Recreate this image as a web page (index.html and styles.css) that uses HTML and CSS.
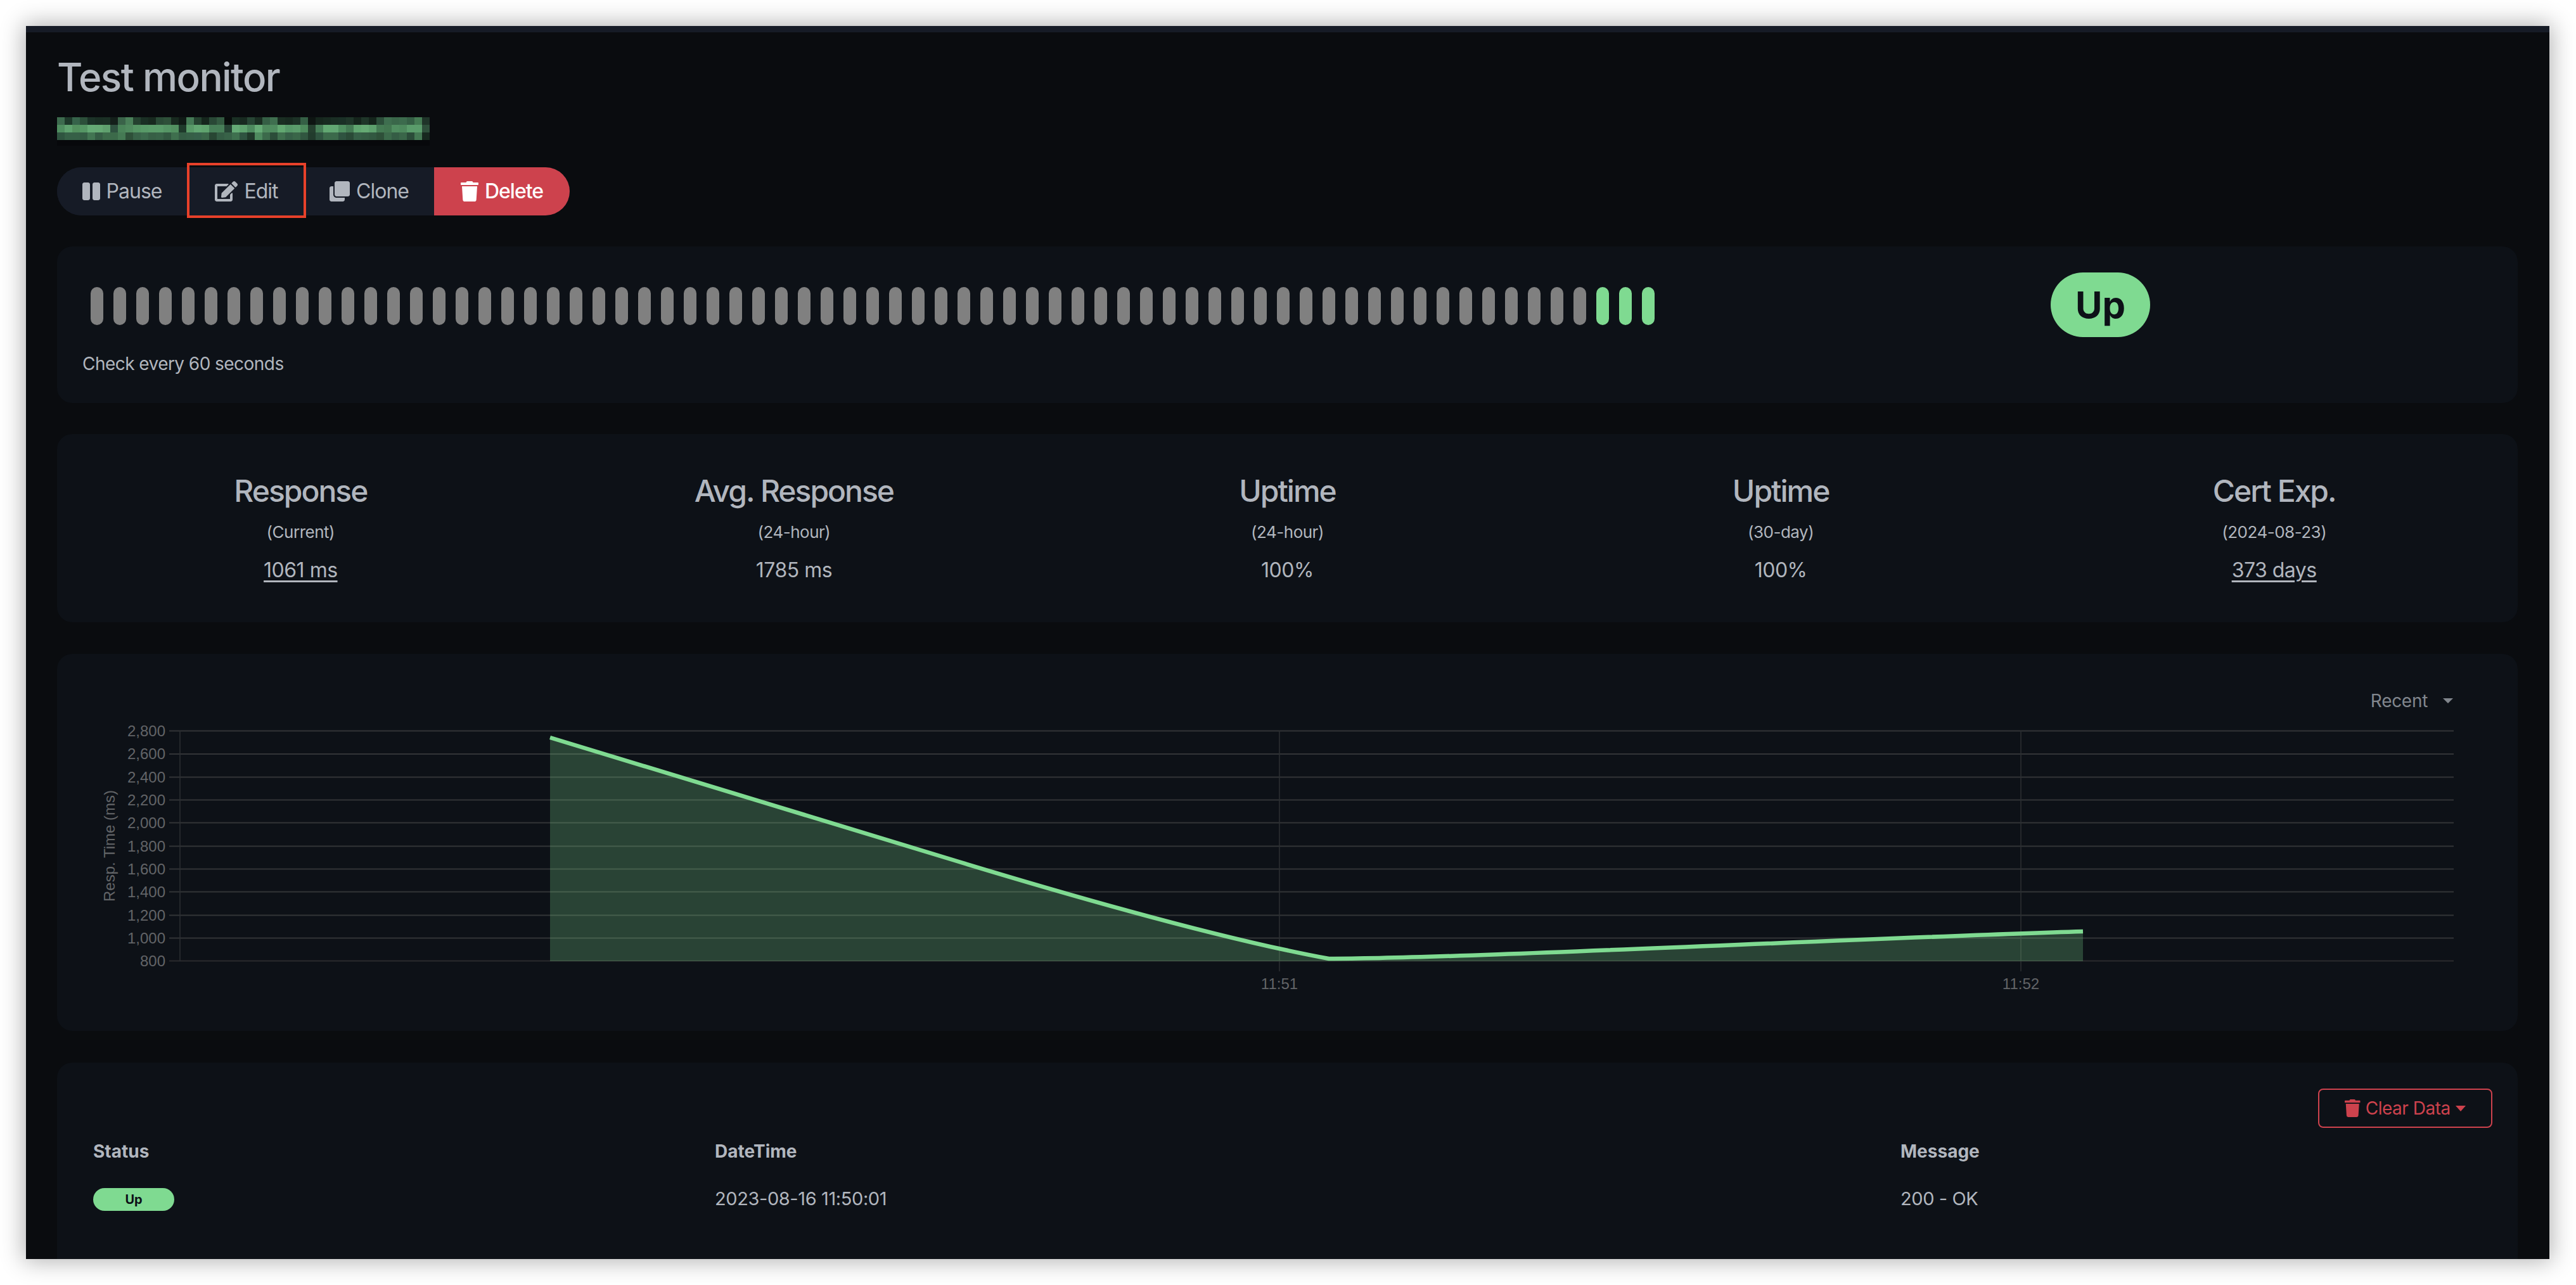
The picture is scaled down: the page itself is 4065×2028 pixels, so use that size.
FILE: index.html
```html
<!DOCTYPE html>
<html lang="en">
<head>
<meta charset="utf-8">
<title>Test monitor</title>
<link rel="stylesheet" href="styles.css">
</head>
<body>
<div class="window">
  <div class="strip"></div>
  <main class="content">
    <h1 class="title">Test monitor</h1>
    <svg class="mosaic" viewBox="0 0 588 45" width="588" height="45" aria-hidden="true" shape-rendering="crispEdges">
      <g>
        <rect x="0" fill="#3d6b4e"/><rect x="12" fill="#1e3a2b"/><rect x="24" fill="#36634a"/><rect x="36" fill="#2c4f3a"/><rect x="48" fill="#1c3328"/><rect x="60" fill="#1a2f24"/><rect x="72" fill="#1b3025"/><rect x="84" fill="#141f1a"/><rect x="96" fill="#3a6349"/><rect x="108" fill="#4a8059"/><rect x="120" fill="#24412f"/><rect x="132" fill="#1a2f24"/><rect x="144" fill="#18291f"/><rect x="156" fill="#2a4a36"/><rect x="168" fill="#2e5039"/><rect x="180" fill="#18291f"/><rect x="192" fill="#101a16"/><rect x="204" fill="#457a56"/><rect x="216" fill="#24412f"/><rect x="228" fill="#16261d"/><rect x="240" fill="#294836"/><rect x="252" fill="#335a41"/><rect x="264" fill="#080c0b"/><rect x="276" fill="#1a3024"/><rect x="288" fill="#182a20"/><rect x="300" fill="#274534"/><rect x="312" fill="#1a2e22"/><rect x="324" fill="#355f45"/><rect x="336" fill="#3f6f4f"/><rect x="348" fill="#1a2e22"/><rect x="360" fill="#182a20"/><rect x="372" fill="#1c3226"/><rect x="384" fill="#355f45"/><rect x="396" fill="#0e1512"/><rect x="408" fill="#16261d"/><rect x="420" fill="#182a20"/><rect x="432" fill="#1a2e24"/><rect x="444" fill="#1a3026"/><rect x="456" fill="#1f3629"/><rect x="468" fill="#15251c"/><rect x="480" fill="#1f3629"/><rect x="492" fill="#15251c"/><rect x="504" fill="#2c4e3a"/><rect x="516" fill="#3e6e4f"/><rect x="528" fill="#3a674a"/><rect x="540" fill="#3c6b4d"/><rect x="552" fill="#355f45"/><rect x="564" fill="#457c54"/><rect x="576" fill="#1f3429"/>
      </g>
      <g transform="translate(0 12)">
        <rect x="0" fill="#4f8e60"/><rect x="12" fill="#5fa26f"/><rect x="24" fill="#53915f"/><rect x="36" fill="#559664"/><rect x="48" fill="#65aa75"/><rect x="60" fill="#65a974"/><rect x="72" fill="#5fa06e"/><rect x="84" fill="#2f5240"/><rect x="96" fill="#4a8459"/><rect x="108" fill="#4f8a5e"/><rect x="120" fill="#559564"/><rect x="132" fill="#589a68"/><rect x="144" fill="#5a9c6a"/><rect x="156" fill="#5a9c6a"/><rect x="168" fill="#559565"/><rect x="180" fill="#529060"/><rect x="192" fill="#1f3a2b"/><rect x="204" fill="#589a68"/><rect x="216" fill="#62a772"/><rect x="228" fill="#5fa36e"/><rect x="240" fill="#477f58"/><rect x="252" fill="#477f58"/><rect x="264" fill="#264334"/><rect x="276" fill="#65ab76"/><rect x="288" fill="#5ea26e"/><rect x="300" fill="#4d8a5e"/><rect x="312" fill="#66ab76"/><rect x="324" fill="#4f8b5e"/><rect x="336" fill="#4f8c5f"/><rect x="348" fill="#62a871"/><rect x="360" fill="#569868"/><rect x="372" fill="#5a9c6b"/><rect x="384" fill="#4d8a5c"/><rect x="396" fill="#25402f"/><rect x="408" fill="#477f58"/><rect x="420" fill="#62a872"/><rect x="432" fill="#62a773"/><rect x="444" fill="#4f8f60"/><rect x="456" fill="#437a53"/><rect x="468" fill="#60a670"/><rect x="480" fill="#65aa74"/><rect x="492" fill="#5da06d"/><rect x="504" fill="#447a53"/><rect x="516" fill="#427650"/><rect x="528" fill="#508d60"/><rect x="540" fill="#4d895d"/><rect x="552" fill="#5a9c6b"/><rect x="564" fill="#5a9c6b"/><rect x="576" fill="#2e4f3b"/>
      </g>
      <g transform="translate(0 24)">
        <rect x="0" fill="#2f5540"/><rect x="12" fill="#366047"/><rect x="24" fill="#366047"/><rect x="36" fill="#345c44"/><rect x="48" fill="#427552"/><rect x="60" fill="#345c44"/><rect x="72" fill="#3c6a4a"/><rect x="84" fill="#3c6a4a"/><rect x="96" fill="#457a54"/><rect x="108" fill="#2e5039"/><rect x="120" fill="#386248"/><rect x="132" fill="#3c6a4d"/><rect x="144" fill="#375f46"/><rect x="156" fill="#386248"/><rect x="168" fill="#325841"/><rect x="180" fill="#3f6f4e"/><rect x="192" fill="#345c44"/><rect x="204" fill="#365f47"/><rect x="216" fill="#36604a"/><rect x="228" fill="#3a6649"/><rect x="240" fill="#284633"/><rect x="252" fill="#345c44"/><rect x="264" fill="#386248"/><rect x="276" fill="#3f704f"/><rect x="288" fill="#2f5340"/><rect x="300" fill="#20392a"/><rect x="312" fill="#4e8a5e"/><rect x="324" fill="#3c6a4b"/><rect x="336" fill="#2c4d39"/><rect x="348" fill="#3f6f4e"/><rect x="360" fill="#365f47"/><rect x="372" fill="#3a6649"/><rect x="384" fill="#315640"/><rect x="396" fill="#223c2d"/><rect x="408" fill="#2f5440"/><rect x="420" fill="#3c6a4b"/><rect x="432" fill="#3c6a4b"/><rect x="444" fill="#2f5340"/><rect x="456" fill="#2a4a37"/><rect x="468" fill="#365f47"/><rect x="480" fill="#345c44"/><rect x="492" fill="#325841"/><rect x="504" fill="#2e5039"/><rect x="516" fill="#3c6a4b"/><rect x="528" fill="#355d45"/><rect x="540" fill="#3a6649"/><rect x="552" fill="#2b4c39"/><rect x="564" fill="#447853"/><rect x="576" fill="#17281f"/>
      </g>
      <rect class="mosaic-foot" x="0" y="36" fill="#07080b"/>
    </svg>
    <div class="btn-group">
      <button class="btn"><svg class="ic" viewBox="0 0 448 512"><path d="M144 479H48c-26.5 0-48-21.5-48-48V79c0-26.5 21.5-48 48-48h96c26.5 0 48 21.5 48 48v352c0 26.5-21.5 48-48 48zm304-48V79c0-26.5-21.5-48-48-48h-96c-26.5 0-48 21.5-48 48v352c0 26.5 21.5 48 48 48h96c26.5 0 48-21.5 48-48z"/></svg>Pause</button>
      <button class="btn btn-edit"><svg class="ic" viewBox="0 0 576 512"><path d="M402.6 83.2l90.2 90.2c3.8 3.8 3.8 10 0 13.8L274.4 405.6l-92.8 10.3c-12.4 1.4-22.9-9.1-21.5-21.5l10.3-92.8L388.8 83.2c3.8-3.8 10-3.8 13.8 0zm162-22.9l-48.8-48.8c-15.2-15.2-39.9-15.2-55.2 0l-35.4 35.4c-3.8 3.8-3.8 10 0 13.8l90.2 90.2c3.8 3.8 10 3.8 13.8 0l35.4-35.4c15.2-15.3 15.2-40 0-55.2zM384 346.2V448H64V128h229.8c3.2 0 6.2-1.3 8.5-3.5l40-40c7.6-7.6 2.2-20.5-8.5-20.5H48C21.5 64 0 85.5 0 112v352c0 26.5 21.5 48 48 48h352c26.5 0 48-21.5 48-48V306.2c0-10.7-12.9-16-20.5-8.5l-40 40c-2.2 2.3-3.5 5.3-3.5 8.5z"/></svg>Edit</button>
      <button class="btn btn-clone"><svg class="ic" viewBox="0 0 512 512"><path d="M464 0c26.51 0 48 21.49 48 48v288c0 26.51-21.49 48-48 48H176c-26.51 0-48-21.49-48-48V48c0-26.51 21.49-48 48-48h288M176 416c-44.112 0-80-35.888-80-80V128H48c-26.51 0-48 21.49-48 48v288c0 26.51 21.49 48 48 48h288c26.51 0 48-21.49 48-48v-48H176z"/></svg>Clone</button>
      <button class="btn btn-danger"><svg class="ic" viewBox="0 0 448 512"><path d="M432 32H312l-9.4-18.7A24 24 0 0 0 281.1 0H166.8a23.72 23.72 0 0 0-21.4 13.3L136 32H16A16 16 0 0 0 0 48v32a16 16 0 0 0 16 16h416a16 16 0 0 0 16-16V48a16 16 0 0 0-16-16zM53.2 467a48 48 0 0 0 47.9 45h245.8a48 48 0 0 0 47.9-45L416 128H32z"/></svg>Delete</button>
    </div>

    <section class="card card-beats">
      <div class="beat-row">
        <div class="beats">
          <i class="b"></i><i class="b"></i><i class="b"></i><i class="b"></i><i class="b"></i><i class="b"></i><i class="b"></i><i class="b"></i><i class="b"></i><i class="b"></i><i class="b"></i>
          <i class="b"></i><i class="b"></i><i class="b"></i><i class="b"></i><i class="b"></i><i class="b"></i><i class="b"></i><i class="b"></i><i class="b"></i><i class="b"></i><i class="b"></i>
          <i class="b"></i><i class="b"></i><i class="b"></i><i class="b"></i><i class="b"></i><i class="b"></i><i class="b"></i><i class="b"></i><i class="b"></i><i class="b"></i><i class="b"></i>
          <i class="b"></i><i class="b"></i><i class="b"></i><i class="b"></i><i class="b"></i><i class="b"></i><i class="b"></i><i class="b"></i><i class="b"></i><i class="b"></i><i class="b"></i>
          <i class="b"></i><i class="b"></i><i class="b"></i><i class="b"></i><i class="b"></i><i class="b"></i><i class="b"></i><i class="b"></i><i class="b"></i><i class="b"></i><i class="b"></i>
          <i class="b"></i><i class="b"></i><i class="b"></i><i class="b"></i><i class="b"></i><i class="b"></i><i class="b"></i><i class="b"></i><i class="b"></i><i class="b"></i><i class="b"></i>
          <i class="b up"></i><i class="b up"></i><i class="b up"></i>
        </div>
        <div class="status-up">Up</div>
      </div>
      <div class="interval">Check every 60 seconds</div>
    </section>

    <section class="card card-stats">
      <div class="stat"><h4>Response</h4><p class="sub">(Current)</p><a class="val link">1061 ms</a></div>
      <div class="stat"><h4>Avg. Response</h4><p class="sub">(24-hour)</p><span class="val">1785 ms</span></div>
      <div class="stat"><h4>Uptime</h4><p class="sub">(24-hour)</p><span class="val">100%</span></div>
      <div class="stat"><h4>Uptime</h4><p class="sub">(30-day)</p><span class="val">100%</span></div>
      <div class="stat"><h4>Cert Exp.</h4><p class="sub">(2024-08-23)</p><a class="val link">373 days</a></div>
    </section>

    <section class="card card-chart">
      <div class="period"><span>Recent</span><i class="caret"></i></div>
      <svg class="chart" viewBox="90 1130 3883 440" width="3883" height="440">
        <g class="grid">
          <path d="M267 1153.5H3872M267 1190H3872M267 1226.500H3872M267 1262.500H3872M267 1298.500H3872M267 1335.500H3872M267 1371.500H3872M267 1407.500H3872M267 1444.500H3872M267 1480.500H3872"/>
          <path class="base" d="M267 1516.500H3872"/>
          <path class="v" d="M2019 1153V1533M3189 1153V1533M284 1153V1517"/>
        </g>
        <path class="area" d="M868 1164L1500 1356C1750 1432 1950 1486 2097 1513C2300 1513 2900 1482 3287 1470V1517H868Z"/>
        <path class="line" d="M868 1164L1500 1356C1750 1432 1950 1486 2097 1513C2300 1513 2900 1482 3287 1470"/>
        <g class="ylabels">
          <text x="261" y="1162">2,800</text><text x="261" y="1198">2,600</text><text x="261" y="1235">2,400</text><text x="261" y="1271">2,200</text><text x="261" y="1307">2,000</text><text x="261" y="1344">1,800</text><text x="261" y="1380">1,600</text><text x="261" y="1416">1,400</text><text x="261" y="1453">1,200</text><text x="261" y="1489">1,000</text><text x="261" y="1525">800</text>
        </g>
        <text class="ytitle" transform="translate(181 1335) rotate(-90)">Resp. Time (ms)</text>
        <g class="xlabels"><text x="2019" y="1561">11:51</text><text x="3189" y="1561">11:52</text></g>
      </svg>
    </section>

    <section class="card card-table">
      <div class="clear-row"><button class="btn-clear"><svg class="ic-red" viewBox="0 0 448 512"><path d="M432 32H312l-9.4-18.7A24 24 0 0 0 281.1 0H166.8a23.72 23.72 0 0 0-21.4 13.3L136 32H16A16 16 0 0 0 0 48v32a16 16 0 0 0 16 16h416a16 16 0 0 0 16-16V48a16 16 0 0 0-16-16zM53.2 467a48 48 0 0 0 47.9 45h245.8a48 48 0 0 0 47.9-45L416 128H32z"/></svg>Clear Data<i class="caret caret-red"></i></button></div>
      <div class="tr th"><div>Status</div><div>DateTime</div><div>Message</div></div>
      <div class="tr td"><div><span class="badge">Up</span></div><div>2023-08-16 11:50:01</div><div>200 - OK</div></div>
    </section>
  </main>
</div>
</body>
</html>
```
FILE: styles.css
```css
* { box-sizing: border-box; }
html, body { margin: 0; background: #fff; }
body { padding: 41px 42px 41px 41px; font-family: Inter, "Noto Sans", "Liberation Sans", sans-serif; color: #b1b6be; }
.window { height: 1946px; background: #0a0c0f; box-shadow: 0 0 34px 4px rgba(0,0,0,.3); overflow: hidden; }
.strip { height: 10px; background: #161b26; }
.content { padding: 34px 50px 0 49px; }
.title { margin: 0; font-size: 62px; line-height: 74px; font-weight: 500; letter-spacing: -1.6px; color: #b1b6be; }

.mosaic { display: block; margin: 26px 0 34px; }
.mosaic rect { width: 12px; height: 12px; }
.mosaic .mosaic-foot { width: 588px; height: 9px; }

.btn-group { display: inline-flex; height: 76px; border-radius: 38px; background: #161b26; vertical-align: top; }
.btn { position: relative; height: 76px; width: 205px; border: 0; padding: 0; background: #161b26; color: #b1b6be; font: 400 32px/76px Inter, "Noto Sans", sans-serif; letter-spacing: -1px; display: flex; align-items: center; justify-content: center; gap: 10px; }
.btn:first-child { border-radius: 38px 0 0 38px; }
.btn-edit { width: 188px; }
.btn-clone { width: 202px; padding-right: 3px; }
.btn-edit::after { content: ""; position: absolute; inset: -7px 0 -4px 0; border: 4px solid #e8412a; }
.btn-danger { width: 214px; background: #cd424d; color: #fff; border-radius: 0 38px 38px 0; font-weight: 500; }
.ic { height: 32px; fill: currentColor; }
.ic-red { height: 28px; fill: #cd424d; }

.card { background: #0d1117; border-radius: 24px; }
.card-beats { margin-top: 49px; padding: 41px 40px 43px; height: 247px; }
.beat-row { display: flex; align-items: flex-start; height: 102px; }
.beats { display: flex; gap: 16px; margin: 23px 0 0 13px; }
.b { display: block; width: 20px; height: 60px; border-radius: 10px; background: #808080; }
.b.up { background: #7fda91; }
.status-up { margin-left: 625px; width: 157px; height: 102px; border-radius: 51px; background: #7fda91; color: #0d1117; font-size: 58px; font-weight: 700; line-height: 102px; text-align: center; }
.interval { margin-top: 22px; font-size: 28px; line-height: 40px; letter-spacing: -0.55px; }

.card-stats { margin-top: 49px; height: 297px; padding-top: 61px; display: flex; justify-content: center; }
.stat { flex: 0 0 778.6px; text-align: center; }
.stat h4 { margin: 0; font-size: 48px; line-height: 58px; font-weight: 500; letter-spacing: -2px; }
.sub { margin: 18px 0 0; font-size: 26px; line-height: 36px; letter-spacing: -0.5px; }
.val { display: inline-block; margin-top: 22px; font-size: 32px; line-height: 40px; letter-spacing: -0.5px; }
.link { text-decoration: underline; text-decoration-thickness: 3px; text-underline-offset: 5px; }

.card-chart { margin-top: 50px; height: 595px; }
.period { display: flex; justify-content: flex-end; align-items: center; gap: 24px; padding: 49px 102px 0 0; height: 98px; font-size: 28px; line-height: 40px; letter-spacing: -0.3px; color: #81868d; }
.caret { display: block; width: 0; height: 0; border-left: 8px solid transparent; border-right: 8px solid transparent; border-top: 8px solid #81868d; }
.chart { display: block; }
.grid path { stroke: #323437; stroke-width: 2; fill: none; }
.grid .base { stroke: #2a2b2e; }
.grid .v { stroke: #2d2f33; stroke-width: 1.5; }
.area { fill: rgba(127,218,145,.25); }
.line { fill: none; stroke: #7fda91; stroke-width: 6.5; }
.chart text { font-family: "Liberation Sans", Arial, sans-serif; font-size: 24px; fill: #626467; }
.ylabels text { text-anchor: end; }
.xlabels text { text-anchor: middle; }
.chart .ytitle { text-anchor: middle; font-size: 24px; }

.card-table { margin-top: 50px; height: 400px; padding-top: 41px; }
.clear-row { display: flex; justify-content: flex-end; padding-right: 40px; }
.btn-clear { display: flex; align-items: center; justify-content: center; gap: 8px; width: 275px; height: 62px; padding: 0; background: transparent; border: 2.500px solid #cd424d; border-radius: 8px; color: #cd424d; font: 400 28px/40px Inter, "Noto Sans", sans-serif; letter-spacing: -0.5px; }
.caret-red { border-top-color: #cd424d; border-top-width: 9px; }
.tr { display: grid; grid-template-columns: 981px 1871px 1fr; padding-left: 57px; align-items: center; line-height: 40px; font-size: 29px; letter-spacing: -0.4px; }
.th { margin-top: 17px; font-size: 28px; font-weight: 700; letter-spacing: 0; }
.td { margin-top: 35px; }
.badge { display: block; width: 128px; height: 36px; margin-top: 2px; border-radius: 18px; background: #7fda91; color: #0d1117; font-size: 20px; font-weight: 700; line-height: 36px; text-align: center; letter-spacing: 0; }
```
